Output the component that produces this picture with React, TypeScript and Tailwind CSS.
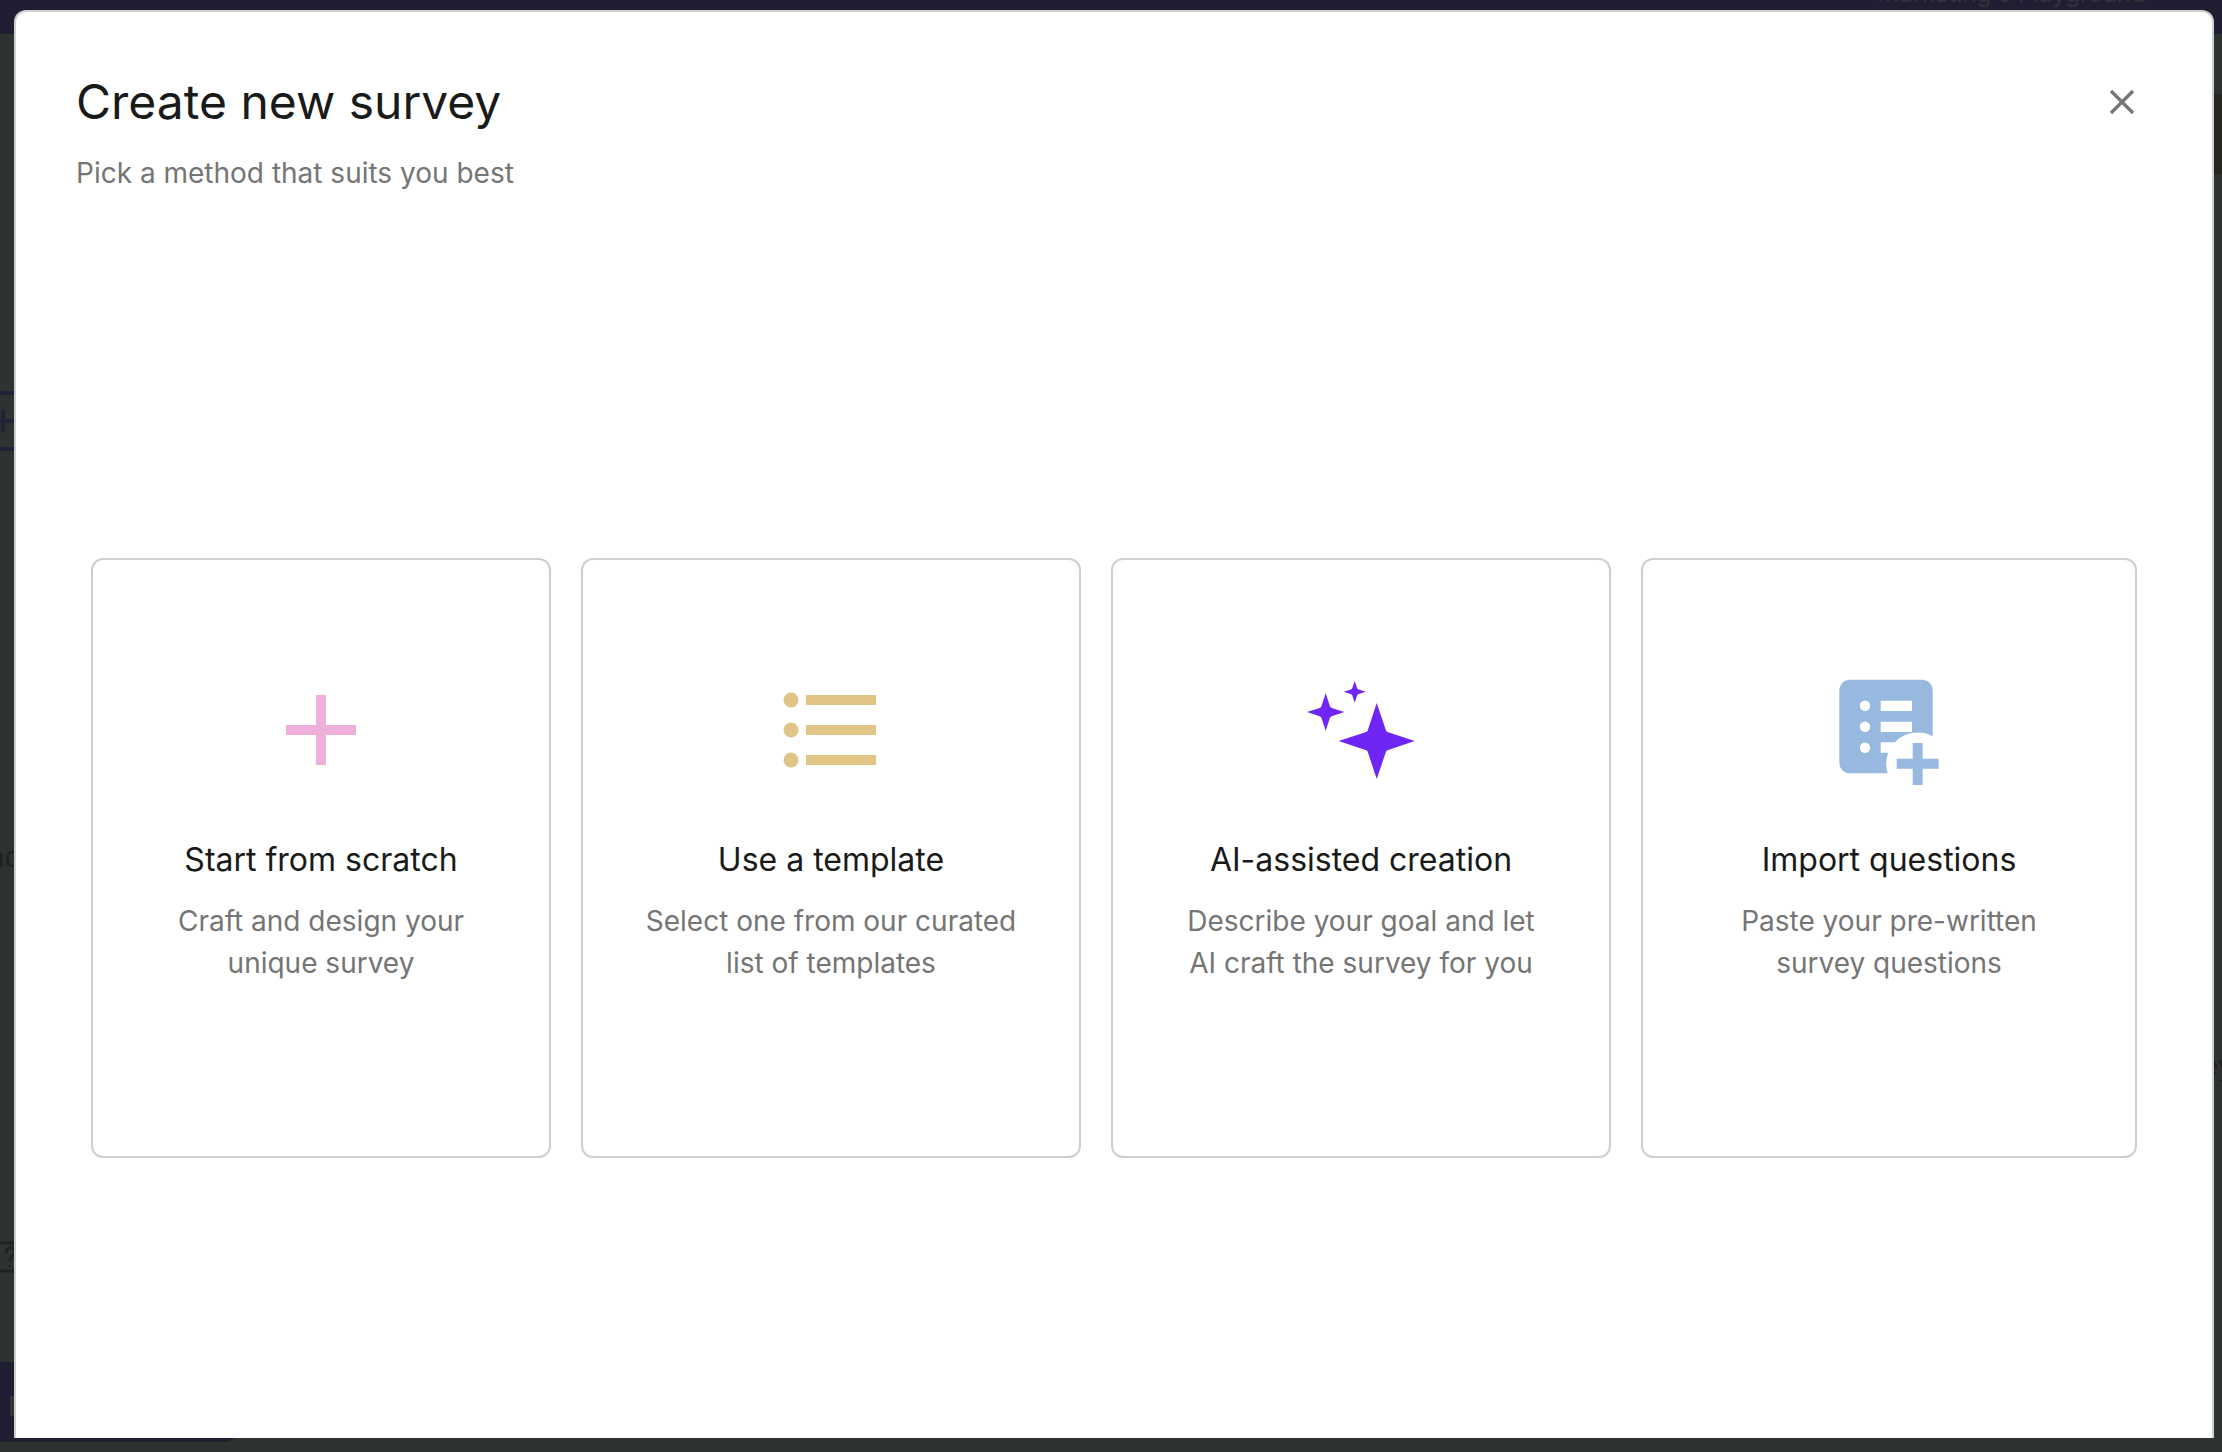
import type { FC } from "react";

const PlusIcon: FC = () => (
  <svg className="size-30" viewBox="0 0 24 24" fill="#eeafdb" aria-hidden="true">
    <path d="M19 13h-6v6h-2v-6H5v-2h6V5h2v6h6z" />
  </svg>
);

const ListIcon: FC = () => (
  <svg className="size-30" viewBox="0 0 24 24" fill="#e1c586" aria-hidden="true">
    <circle cx="4" cy="6" r="1.5" />
    <circle cx="4" cy="12" r="1.5" />
    <circle cx="4" cy="18" r="1.5" />
    <path d="M7 5h14v2H7zM7 11h14v2H7zM7 17h14v2H7z" />
  </svg>
);

const SparklesIcon: FC = () => (
  <svg className="size-30" viewBox="0 0 120 120" fill="#6f26f4" aria-hidden="true">
    <path d="M75.7 33L85 60.5Q85.4 61.7 86.5 62L113.7 71L86.5 80.2Q85.4 80.5 85 81.7L75.7 109L66.7 81.7Q66.3 80.5 65.2 80.2L37.7 71L65.2 62Q66.3 61.7 66.7 60.5Z" />
    <path d="M24.7 23.3L28.9 36Q29.3 37.6 30.7 38L43.4 42L30.7 46.2Q29.3 46.6 28.9 48L24.7 60.7L20.5 48Q20.1 46.6 18.7 46.2L6 42L18.7 38Q20.1 37.6 20.5 36Z" />
    <path d="M53.7 11L56 17.8Q56.4 19.2 57.8 19.5L64.7 21.8L57.8 24.1Q56.4 24.4 56 25.8L53.7 32.8L51.4 25.8Q51 24.4 49.6 24.1L42.7 21.8L49.6 19.5Q51 19.2 51.4 17.8Z" />
  </svg>
);

const ImportIcon: FC = () => (
  <svg className="size-30" viewBox="0 0 120 120" fill="#97b9e0" aria-hidden="true">
    <rect x="10.3" y="9.7" width="93.4" height="93.6" rx="10.4" />
    <g fill="#fff">
      <circle cx="36" cy="35.7" r="5.2" />
      <circle cx="36" cy="56.7" r="5.2" />
      <circle cx="36" cy="77.7" r="5.2" />
      <path d="M51.7 30.7H83v10.4H51.7zM51.7 51.7H83v10.4H51.7zM51.7 72.3H83v10.4H51.7z" />
      <circle cx="88.7" cy="94" r="31.6" />
    </g>
    <path d="M83.7 73h10v15.7h16v10h-16V115h-10V98.7h-16v-10h16z" />
  </svg>
);

const methods = [
  {
    icon: PlusIcon,
    title: "Start from scratch",
    lines: ["Craft and design your", "unique survey"],
  },
  {
    icon: ListIcon,
    title: "Use a template",
    lines: ["Select one from our curated", "list of templates"],
  },
  {
    icon: SparklesIcon,
    title: "AI-assisted creation",
    lines: ["Describe your goal and let", "AI craft the survey for you"],
  },
  {
    icon: ImportIcon,
    title: "Import questions",
    lines: ["Paste your pre-written", "survey questions"],
  },
];

// Dimmed page behind the dialog, only its edges are visible
const Backdrop = () => (
  <div
    className="absolute inset-0 flex flex-col overflow-hidden bg-[#2e3231] text-[#1f2221]"
    aria-hidden="true"
  >
    <div className="flex h-[34px] shrink-0 justify-end bg-[#201e33] pr-19">
      <span className="-mt-5 text-2xl leading-7 text-[#33323a]">Marketing's Playground</span>
    </div>
    <div className="flex flex-1 justify-between">
      <div className="flex w-60 flex-col">
        <div className="mt-[357px] flex h-15 items-center border-y-4 border-[#222138]">
          <svg className="-ml-2 size-6" viewBox="0 0 24 24" stroke="#222138" strokeWidth="4">
            <path d="M11 1v22M0 12h24" />
          </svg>
        </div>
        <span className="mt-[390px] -ml-3 text-[28px] leading-8">nd</span>
        <svg className="mt-[368px] size-8" viewBox="0 0 32 32" fill="none" stroke="#202322" strokeWidth="3">
          <path d="M0 2h28v28H0M6 12q0-5 5-5t4 5l-5 6v3M10 24v2" />
        </svg>
        <div className="mt-auto mb-[10px] flex h-20 items-center rounded-br-2xl bg-[#201e33] pt-2 pl-[10px]">
          <span className="h-5 w-2 bg-[#343434]" />
        </div>
      </div>
      <div className="flex w-2 flex-col">
        <div className="mt-15 h-20 bg-[#25281f]" />
        <span className="mt-[876px] -ml-3 text-[28px] leading-8">ey</span>
      </div>
    </div>
  </div>
);

const App = () => {
  return (
    <div className="relative flex min-h-screen flex-col font-['Inter',sans-serif]">
      <Backdrop />
      <div
        role="dialog"
        aria-labelledby="dialog-title"
        className="relative mt-[10px] mr-2 mb-[14px] ml-[14px] flex flex-1 flex-col rounded-t-xl border-2 border-b-0 border-[#cfcfcf] bg-white"
      >
        <header className="flex items-start justify-between pt-15 pr-[70px] pb-21 pl-15">
          <div>
            <h1 id="dialog-title" className="text-5xl leading-[60px] text-[#191b1a]">
              Create new survey
            </h1>
            <p className="mt-5 text-[28px] leading-[42px] text-[#757575]">
              Pick a method that suits you best
            </p>
          </div>
          <button type="button" aria-label="Close" className="mt-[10px] cursor-pointer">
            <svg className="size-10" viewBox="0 0 40 40" stroke="#757575" strokeWidth="3.2">
              <path d="M9 9l22 22M31 9L9 31" />
            </svg>
          </button>
        </header>
        <main className="flex flex-1 items-center px-[75px]">
          <div className="grid w-full grid-cols-[460fr_500fr_500fr_496fr] gap-[30px]">
            {methods.map(({ icon: Icon, title, lines }) => (
              <button
                type="button"
                key={title}
                className="flex h-[600px] cursor-pointer flex-col items-center rounded-xl border-2 border-[#cfcfcf] pt-[110px] text-center"
              >
                <Icon />
                <span className="mt-12 text-[32px] leading-11 text-[#191b1a]">{title}</span>
                <span className="mt-[18px] text-[28px] leading-[42px] text-[#757575]">
                  {lines[0]}
                  <br />
                  {lines[1]}
                </span>
              </button>
            ))}
          </div>
        </main>
      </div>
    </div>
  );
};

export default App;
